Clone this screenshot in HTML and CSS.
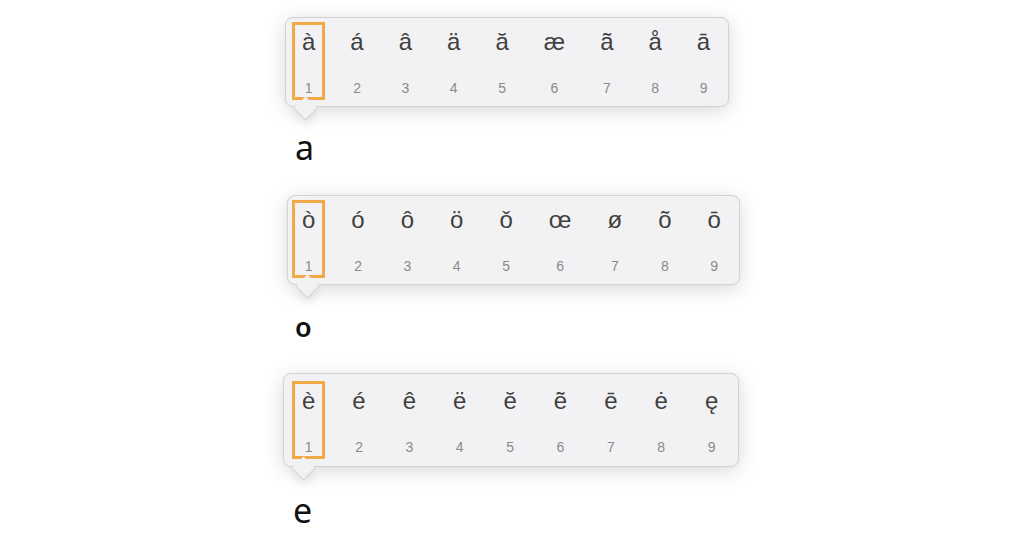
FILE: index.html
```html
<!DOCTYPE html>
<html lang="en">
<head>
  <meta charset="UTF-8" />
  <title>Accent picker</title>
  <link rel="stylesheet" href="styles.css">
</head>
<body>

  <div class="group group-a">
    <div class="picker picker-a">
      <div class="key selected"><span class="char">à</span><span class="num">1</span></div>
      <div class="key"><span class="char">á</span><span class="num">2</span></div>
      <div class="key"><span class="char">â</span><span class="num">3</span></div>
      <div class="key"><span class="char">ä</span><span class="num">4</span></div>
      <div class="key"><span class="char">ă</span><span class="num">5</span></div>
      <div class="key"><span class="char">æ</span><span class="num">6</span></div>
      <div class="key"><span class="char">ã</span><span class="num">7</span></div>
      <div class="key"><span class="char">å</span><span class="num">8</span></div>
      <div class="key"><span class="char">ā</span><span class="num">9</span></div>
    </div>
    <div class="typed typed-a">a</div>
  </div>

  <div class="group group-o">
    <div class="picker picker-o">
      <div class="key selected"><span class="char">ò</span><span class="num">1</span></div>
      <div class="key"><span class="char">ó</span><span class="num">2</span></div>
      <div class="key"><span class="char">ô</span><span class="num">3</span></div>
      <div class="key"><span class="char">ö</span><span class="num">4</span></div>
      <div class="key"><span class="char">ǒ</span><span class="num">5</span></div>
      <div class="key"><span class="char">œ</span><span class="num">6</span></div>
      <div class="key"><span class="char">ø</span><span class="num">7</span></div>
      <div class="key"><span class="char">õ</span><span class="num">8</span></div>
      <div class="key"><span class="char">ō</span><span class="num">9</span></div>
    </div>
    <div class="typed typed-o">o</div>
  </div>

  <div class="group group-e">
    <div class="picker picker-e">
      <div class="key selected"><span class="char">è</span><span class="num">1</span></div>
      <div class="key"><span class="char">é</span><span class="num">2</span></div>
      <div class="key"><span class="char">ê</span><span class="num">3</span></div>
      <div class="key"><span class="char">ë</span><span class="num">4</span></div>
      <div class="key"><span class="char">ĕ</span><span class="num">5</span></div>
      <div class="key"><span class="char">ẽ</span><span class="num">6</span></div>
      <div class="key"><span class="char">ē</span><span class="num">7</span></div>
      <div class="key"><span class="char">ė</span><span class="num">8</span></div>
      <div class="key"><span class="char">ę</span><span class="num">9</span></div>
    </div>
    <div class="typed typed-e">e</div>
  </div>

</body>
</html>
```

FILE: styles.css
```css
:root {
  --popup-bg: #f2f2f4;
  --popup-border: #d3d3d6;
  --accent: #f2a947;
  --char-color: #404040;
  --num-color: #8a8a8a;
}

body {
  margin: 0;
  background: #ffffff;
  font-family: "Liberation Sans", Arial, sans-serif;
}

.group {
  display: flex;
  flex-direction: column;
  align-items: flex-start;
}

.group-a {
  margin-top: 17px;
  margin-left: 285px;
}

.group-o {
  margin-top: 28px;
  margin-left: 287px;
}

.group-e {
  margin-top: 26px;
  margin-left: 283px;
}

/* popup */
.picker {
  position: relative;
  display: flex;
  gap: 15px;
  padding: 4px 8px 6px 6px;
  background: var(--popup-bg);
  border: 1px solid var(--popup-border);
  border-radius: 8px;
  box-shadow: 0 4px 20px rgba(0,0,0,0.15), 0 0 3px rgba(0,0,0,0.04);
}

.picker::after {
  content: "";
  position: absolute;
  left: 11px;
  bottom: -11px;
  width: 16px;
  height: 16px;
  background: var(--popup-bg);
  border-right: 1px solid var(--popup-border);
  border-bottom: 1px solid var(--popup-border);
  transform: rotate(45deg);
  box-shadow: 4px 4px 8px rgba(0,0,0,0.08);
}

.picker-o {
  gap: 16px;
  padding: 4px 8px 6px 4px;
}

.picker-e {
  gap: 17px;
  padding: 7px 10px 7px 8px;
}

.key {
  box-sizing: border-box;
  height: 78px;
  min-width: 33px;
  padding: 2px 7px 1px;
  border: 3px solid transparent;
  display: flex;
  flex-direction: column;
  align-items: center;
  justify-content: space-between;
}

.key.selected {
  border-color: var(--accent);
}

.char {
  font-size: 24px;
  line-height: 30px;
  color: var(--char-color);
}

.num {
  font-size: 14px;
  line-height: 16px;
  color: var(--num-color);
}

/* typed letter under the popup */
.typed {
  font-family: "Noto Sans", sans-serif;
  line-height: 40px;
  color: #111;
  padding-left: 10px;
}

.typed-a {
  font-size: 34px;
  margin-top: 20px;
}

.typed-o {
  font-size: 27px;
  font-weight: 600;
  margin-top: 22px;
  padding-left: 8px;
}

.typed-e {
  font-size: 34px;
  margin-top: 23px;
}
```
